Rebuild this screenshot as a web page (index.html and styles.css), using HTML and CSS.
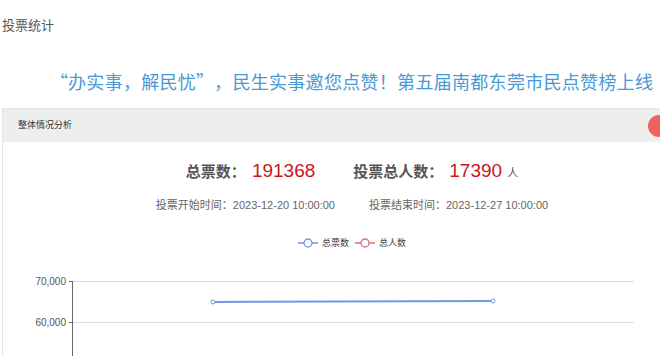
FILE: index.html
```html
<!DOCTYPE html>
<html lang="zh-CN">
<head>
    <meta charset="UTF-8">
    <meta name="viewport" content="width=device-width, initial-scale=1.0">
    <title>投票统计</title>
    <link rel="stylesheet" href="styles.css">
</head>
<body>

<div class="page">
    <div class="page-title">投票统计</div>

    <h1 class="headline"><span class="q-open">“</span>办实事，解民忧<span class="q-close">”</span>，民生实事邀您点赞！第五届南都东莞市民点赞榜上线</h1>

    <div class="card">
        <div class="card-header">
            整体情况分析
            <span class="float-btn"></span>
        </div>
        <div class="card-body">
            <div class="totals">
                <span class="label">总票数：</span>
                <span class="num">191368</span>
                <span class="label label-gap">投票总人数：</span>
                <span class="num">17390</span>
                <span class="unit">人</span>
            </div>
            <div class="times">
                <span>投票开始时间：2023-12-20 10:00:00</span>
                <span>投票结束时间：2023-12-27 10:00:00</span>
            </div>

            <div class="legend">
                <div class="legend-item">
                    <svg width="20" height="10" viewBox="0 0 20 10">
                        <line x1="0" y1="5" x2="20" y2="5" stroke="#6f9ae6" stroke-width="1.5"/>
                        <circle cx="10" cy="5" r="4" fill="#fff" stroke="#6f9ae6" stroke-width="1.3"/>
                    </svg>
                    总票数
                </div>
                <div class="legend-item">
                    <svg width="20" height="10" viewBox="0 0 20 10">
                        <line x1="0" y1="5" x2="20" y2="5" stroke="#d9707e" stroke-width="1.5"/>
                        <circle cx="10" cy="5" r="4" fill="#fff" stroke="#d9707e" stroke-width="1.3"/>
                    </svg>
                    总人数
                </div>
            </div>

            <svg class="chart" width="700" height="100" viewBox="0 0 700 100">
                <!-- grid -->
                <line x1="71" y1="19.5" x2="633" y2="19.5" stroke="#dcdcdc" stroke-width="1"/>
                <line x1="71" y1="60.5" x2="633" y2="60.5" stroke="#dcdcdc" stroke-width="1"/>
                <!-- y axis -->
                <line x1="71.5" y1="19" x2="71.5" y2="100" stroke="#666" stroke-width="1"/>
                <line x1="68" y1="19.5" x2="71" y2="19.5" stroke="#666" stroke-width="1"/>
                <line x1="68" y1="60.5" x2="71" y2="60.5" stroke="#666" stroke-width="1"/>
                <text x="65" y="23" class="axis-label">70,000</text>
                <text x="65" y="64" class="axis-label">60,000</text>
                <!-- series -->
                <polyline points="212,40 492,39" fill="none" stroke="#6f9ae6" stroke-width="2"/>
                <circle cx="212" cy="40" r="2" fill="#fff" stroke="#6f9ae6" stroke-width="1"/>
                <circle cx="492" cy="39" r="2" fill="#fff" stroke="#6f9ae6" stroke-width="1"/>
            </svg>
        </div>
    </div>
</div>

</body>
</html>
```

FILE: styles.css
```css
body {
    margin: 0;
    padding: 0;
    background-color: #fff;
    font-family: "Liberation Sans", "Noto Sans CJK SC", sans-serif;
    color: #555;
    overflow: hidden;
}
.page {
    width: 700px;
    padding-left: 2px;
}
.page-title {
    font-size: 13px;
    line-height: 20px;
    padding-top: 16px;
    color: #555;
}
.headline {
    margin: 0;
    padding: 33px 0 0 48px;
    font-family: "Noto Sans CJK SC", sans-serif;
    font-size: 18px;
    letter-spacing: 0.3px;
    line-height: 24px;
    font-weight: normal;
    color: #4a98d4;
    white-space: nowrap;
}
/* full-width quote marks, as the CJK system font draws them */
.headline .q-open,
.headline .q-close {
    display: inline-block;
    width: 1em;
}
.headline .q-open {
    text-align: right;
}
.headline .q-close {
    text-align: left;
}
.card {
    margin-top: 15px;
    border: 1px solid #e4e4e4;
    border-bottom: none;
}
.card-header {
    position: relative;
    height: 33px;
    line-height: 33px;
    padding-left: 15px;
    background-color: #eeeeee;
    font-size: 9px;
    color: #333;
}
.card-header .float-btn {
    position: absolute;
    right: 31px;
    top: 6px;
    width: 22px;
    height: 22px;
    border-radius: 50%;
    background-color: #f06262;
}
.card-body {
    display: flex;
    flex-direction: column;
    align-items: center;
    padding-top: 18px;
}
.totals {
    display: flex;
    align-items: baseline;
    height: 26px;
}
.totals .label {
    font-size: 15px;
    font-weight: bold;
    color: #555;
    margin-right: 6px;
}
.totals .label-gap {
    margin-left: 38px;
}
.totals .num {
    font-size: 19px;
    color: #c8161d;
}
.totals .unit {
    font-size: 11px;
    color: #555;
    margin-left: 5px;
}
.times {
    display: flex;
    gap: 34px;
    margin-top: 12px;
    font-size: 11px;
    color: #666;
    line-height: 14px;
}
.legend {
    display: flex;
    gap: 6px;
    margin-top: 26px;
    font-size: 9px;
    color: #444;
    line-height: 10px;
}
.legend-item {
    display: flex;
    align-items: center;
    gap: 4px;
}
.chart {
    display: block;
    margin-top: 14px;
    align-self: flex-start;
    margin-left: -2px;
}
.chart .axis-label {
    font-family: "Liberation Sans", sans-serif;
    font-size: 10px;
    fill: #555;
    text-anchor: end;
}
```
